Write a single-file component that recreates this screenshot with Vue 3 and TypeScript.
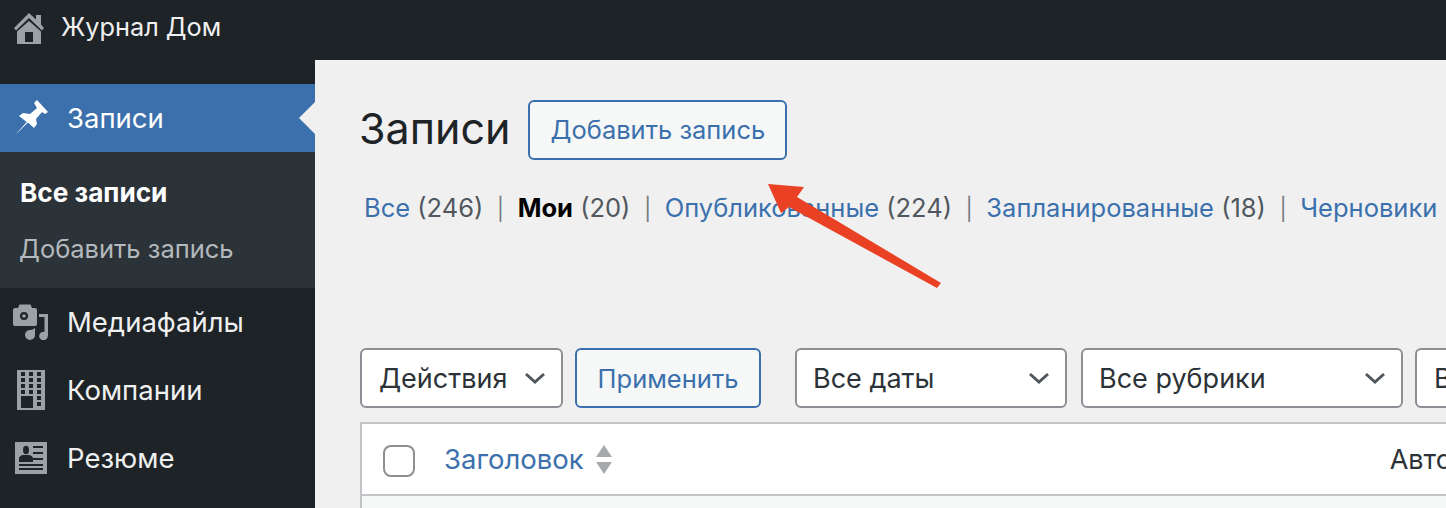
<template>
  <div class="page">
    <header class="topbar">
      <svg class="home-icon" viewBox="14 13 30 31" width="30" height="31">
        <path d="M29 13 L36 19.500 V15 H41 V24.500 L44 28 L42 30.500 L29 18 L16 30.500 L14 28 Z" fill="#9ca1a7" />
        <path fill-rule="evenodd" d="M29 21 L41 31.500 V44 H17 V31.500 Z M25 32 V42 H33 V32 Z" fill="#9ca1a7" />
      </svg>
      <span class="site-name">Журнал Дом</span>
    </header>

    <div class="body">
      <aside class="sidebar">
        <div class="menu-item active">
          <svg class="menu-icon" viewBox="0 0 36 36" width="36" height="36">
            <path d="M2.300 34.700 L13.700 22 L6 16 L10 13 L17 14 L24 8 L21 3 L24 0 L35 12 L32 14 L29 12 L23 19 L24 24 L21 28 L15 22.500 Z" fill="#fff" />
          </svg>
          <span>Записи</span>
        </div>
        <div class="submenu">
          <div class="sub-item current">Все записи</div>
          <div class="sub-item">Добавить запись</div>
        </div>
        <div class="menu-item">
          <svg class="menu-icon" viewBox="0 0 36 36" width="36" height="36">
            <path fill-rule="evenodd" d="M2 4 H5 L6.500 0.500 H17.500 L19 4 H22 Q24 4 24 6 V20 Q24 22 22 22 H2 Q0 22 0 20 V6 Q0 4 2 4 Z M11 8 A4 4 0 1 0 11 16 A4 4 0 1 0 11 8 Z" fill="#9ca1a7" />
            <circle cx="11" cy="12" r="1.800" fill="#9ca1a7" />
            <path d="M26 10 H35 V32 H31.500 V13 H26 Z" fill="#9ca1a7" />
            <circle cx="30.500" cy="32" r="4.300" fill="#9ca1a7" />
            <path d="M22 24 V31 A5 5 0 1 1 17 26 Q20 26 22 24 Z" fill="#9ca1a7" />
          </svg>
          <span>Медиафайлы</span>
        </div>
        <div class="menu-item">
          <svg class="menu-icon" viewBox="0 0 36 40" width="36" height="40">
            <path fill-rule="evenodd" d="M4 0 H32 V40 H4 Z M8 2 V6 H12 V2 Z M16 2 V6 H20 V2 Z M24 2 V6 H28 V2 Z M8 8 V12 H12 V8 Z M16 8 V12 H20 V8 Z M24 8 V12 H28 V8 Z M8 14 V18 H12 V14 Z M16 14 V18 H20 V14 Z M24 14 V18 H28 V14 Z M8 20 V24 H12 V20 Z M16 20 V24 H20 V20 Z M24 20 V24 H28 V20 Z M8 26 V38 H20 V26 Z M24 26 V30 H28 V26 Z M24 32 V36 H28 V32 Z" fill="#9ca1a7" />
          </svg>
          <span>Компании</span>
        </div>
        <div class="menu-item">
          <svg class="menu-icon" viewBox="0 0 36 36" width="36" height="36">
            <path fill-rule="evenodd" d="M2 2 H34 V34 H2 Z M6 24 V26 H30 V24 Z M6 28 V30 H30 V28 Z M20 6 V8 H30 V6 Z M20 12 V14 H30 V12 Z M20 18 V20 H30 V18 Z" fill="#9ca1a7" />
            <ellipse cx="13" cy="10" rx="3" ry="4.200" fill="#1d2327" />
            <path d="M6 22 V18.500 Q6 16 10 15 H16 Q20 16 20 18.500 V22 Z" fill="#1d2327" />
          </svg>
          <span>Резюме</span>
        </div>
      </aside>

      <main class="content">
        <div class="heading">
          <h1>Записи</h1>
          <button class="btn add-new">Добавить запись</button>
        </div>

        <ul class="subsub">
          <li><a>Все</a> <span class="count">(246)</span><i>|</i></li>
          <li><b>Мои</b> <span class="count">(20)</span><i>|</i></li>
          <li><a>Опубликованные</a> <span class="count">(224)</span><i>|</i></li>
          <li><a>Запланированные</a> <span class="count">(18)</span><i>|</i></li>
          <li><a>Черновики</a></li>
        </ul>

        <div class="toolbar">
          <div class="select actions">Действия<svg class="chevron" viewBox="0 0 24 14" width="24" height="14"><path d="M3 3 L12 11 L21 3" fill="none" stroke="#50575e" stroke-width="3" /></svg></div>
          <button class="btn apply">Применить</button>
          <div class="select dates">Все даты<svg class="chevron" viewBox="0 0 24 14" width="24" height="14"><path d="M3 3 L12 11 L21 3" fill="none" stroke="#50575e" stroke-width="3" /></svg></div>
          <div class="select cats">Все рубрики<svg class="chevron" viewBox="0 0 24 14" width="24" height="14"><path d="M3 3 L12 11 L21 3" fill="none" stroke="#50575e" stroke-width="3" /></svg></div>
          <div class="select more">В</div>
        </div>

        <div class="table">
          <div class="thead">
            <span class="checkbox"></span>
            <a class="col-title">Заголовок</a>
            <svg class="sort" viewBox="0 0 18 30" width="18" height="30">
              <path d="M9 0 L17 12 H1 Z M1 17 H17 L9 29 Z" fill="#a7aaad" />
            </svg>
            <span class="col-author">Автор</span>
          </div>
        </div>
      </main>
    </div>

    <svg class="arrow" viewBox="0 0 1446 508" width="1446" height="508">
      <path d="M768 184 L804 187 L797 197 L941 283 L937 288 L789 207 L781 213 Z" fill="#ea4125" />
    </svg>
  </div>
</template>

<script setup lang="ts">
</script>

<style>
html, body {
  margin: 0;
  background: #f0f0f1;
  overflow: hidden;
}
</style>

<style scoped>
.page {
  position: relative;
  width: 1446px;
  height: 508px;
  overflow: hidden;
  font-family: Inter, "Noto Sans", sans-serif;
  font-size: 27px;
  color: #2c3338;
}

.topbar {
  display: flex;
  align-items: center;
  height: 60px;
  padding: 0 0 3px 14px;
  box-sizing: border-box;
  background: #1d2327;
  color: #f0f0f1;
}

.home-icon {
  margin-right: 17px;
}

.site-name {
  font-size: 25.300px;
  margin-bottom: 5px;
}

.body {
  display: flex;
  height: 448px;
}

.sidebar {
  width: 315px;
  flex: none;
  padding-top: 24px;
  box-sizing: border-box;
  background: #1d2327;
  color: #f0f0f1;
}

.menu-item {
  position: relative;
  display: flex;
  align-items: center;
  height: 68px;
  padding-left: 13px;
  font-size: 27.500px;
}

.menu-icon {
  flex: none;
  width: 36px;
  margin-right: 18px;
}

.menu-item.active {
  background: #3b70ad;
  color: #fff;
}

.menu-item.active::after {
  content: "";
  position: absolute;
  right: 0;
  top: 50%;
  margin-top: -16px;
  border: 16px solid transparent;
  border-left-width: 0;
  border-right-color: #f0f0f1;
}

.submenu {
  height: 136px;
  padding-top: 13px;
  box-sizing: border-box;
  background: #2c3338;
}

.sub-item {
  height: 56px;
  padding-left: 19px;
  line-height: 56px;
  font-size: 25.500px;
  color: #b4b9be;
}

.sub-item.current {
  padding-left: 20px;
  color: #fff;
  font-size: 26.200px;
  font-weight: 700;
}

.content {
  flex: 1;
  min-width: 0;
  padding: 40px 0 0 45px;
  background: #f0f0f1;
}

.heading {
  display: flex;
  align-items: center;
  height: 60px;
}

h1 {
  margin: 0 18px 5px -1px;
  font-size: 43px;
  font-weight: 400;
  color: #1d2327;
}

.btn {
  height: 60px;
  box-sizing: border-box;
  border: 2px solid #3b70ad;
  border-radius: 6px;
  background: #f6f7f7;
  color: #3b70ad;
  font: inherit;
  font-size: 25.500px;
}

.add-new {
  width: 259px;
  padding: 0 0 2px;
}

.subsub {
  display: flex;
  margin: 32px 0 0 4px;
  padding: 0;
  list-style: none;
  height: 32px;
  line-height: 32px;
  font-size: 25.500px;
  white-space: nowrap;
  color: #50575e;
}

.subsub a {
  color: #3b70ad;
}

.subsub b {
  color: #000;
}

.subsub i {
  font-style: normal;
  font-size: 22px;
  margin: 0 13.500px;
  color: #787c82;
}

.toolbar {
  display: flex;
  align-items: center;
  gap: 12px;
  margin-top: 124px;
  white-space: nowrap;
}

.select {
  display: flex;
  flex: none;
  align-items: center;
  justify-content: space-between;
  height: 60px;
  padding: 0 14px 0 17px;
  box-sizing: border-box;
  border: 2px solid #8c8f94;
  border-radius: 6px;
  background: #fff;
  color: #2c3338;
  font-size: 27px;
}

.actions { width: 203px; }
.dates { width: 272px; margin-left: 22px; padding-left: 16px; }
.cats { width: 322px; margin-left: 2px; padding-left: 16px; }
.more { width: 200px; }

.apply {
  width: 186px;
  flex: none;
  font-size: 25.500px;
}

.table {
  margin-top: 14px;
  border-top: 2px solid #c3c4c7;
  border-left: 2px solid #c3c4c7;
  background: #f6f7f7;
  height: 100px;
}

.thead {
  display: flex;
  align-items: center;
  height: 72px;
  box-sizing: border-box;
  border-bottom: 2px solid #c3c4c7;
  background: #fff;
  padding-left: 21px;
  white-space: nowrap;
}

.thead > * {
  flex: none;
}

.checkbox {
  width: 32px;
  height: 32px;
  margin-top: 3px;
  box-sizing: border-box;
  border: 2px solid #8c8f94;
  border-radius: 8px;
  background: #fff;
}

.col-title {
  margin-left: 29px;
  font-size: 27.500px;
  color: #3b70ad;
}

.sort {
  margin-left: 11px;
  margin-top: 2px;
}

.col-author {
  margin-left: 777px;
}

.arrow {
  position: absolute;
  inset: 0;
  pointer-events: none;
}
</style>
